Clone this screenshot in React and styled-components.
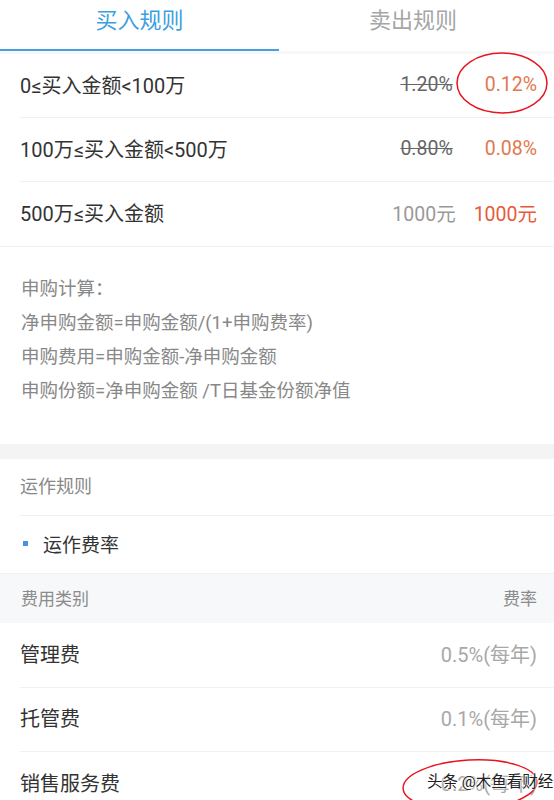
import React from 'react';
import styled, { createGlobalStyle } from 'styled-components';

const GlobalStyle = createGlobalStyle`
  body {
    margin: 0;
    background: #fff;
    font-family: Roboto, "Noto Sans CJK SC", sans-serif;
  }
`;

const Page = styled.div`
  position: relative;
  width: 554px;
  height: 800px;
  overflow: hidden;
  background: #fff;
`;

const Tabs = styled.div`
  display: flex;
  height: 51px;
  border-bottom: 3px solid #f6f7f9;
`;

const Tab = styled.div`
  flex: ${(p) => (p.active ? '0 0 279px' : '1')};
  display: flex;
  align-items: center;
  justify-content: center;
  font-size: 22px;
  padding-bottom: 14px;
  box-sizing: border-box;
  color: ${(p) => (p.active ? '#3d9fe0' : '#a6a6a6')};
  border-bottom: 2px solid ${(p) => (p.active ? '#4a9fdc' : 'transparent')};
  margin-left: ${(p) => (p.active ? '0' : '-7px')};
`;

const Row = styled.div`
  display: flex;
  align-items: center;
  height: ${(p) => p.h || 64}px;
  margin-left: 20px;
  padding-right: 17px;
  padding-bottom: 3px;
  box-sizing: border-box;
  border-bottom: ${(p) => (p.last ? 'none' : '1px solid #f0f0f0')};
`;

const Label = styled.div`
  flex: 1;
  font-size: 20px;
  color: #333;
`;

const OldPrice = styled.span`
  font-size: 19.5px;
  color: ${(p) => (p.plain ? '#999' : '#666')};
  text-decoration: ${(p) => (p.plain ? 'none' : 'line-through')};
`;

const NewPrice = styled.span`
  font-size: 19.5px;
  color: ${(p) => (p.strong ? '#e65a3a' : '#e2784e')};
  margin-left: ${(p) => p.gap || 32}px;
`;

const RuleBlock = styled.div`
  border-top: 1px solid #f0f0f0;
  padding: 25px 20px 36px 21px;
  display: flex;
  flex-direction: column;
`;

const RuleLine = styled.div`
  font-size: 18.5px;
  line-height: 34px;
  color: #888;
`;

const Gap = styled.div`
  height: 15px;
  background: #f4f4f4;
`;

const SectionTitle = styled.div`
  display: flex;
  align-items: center;
  height: 57px;
  padding-bottom: 4px;
  box-sizing: border-box;
  margin-left: 20px;
  font-size: 18px;
  color: #888;
  border-bottom: 1px solid #f0f0f0;
`;

const SubTitle = styled.div`
  display: flex;
  align-items: center;
  height: 57px;
  padding-left: 23px;
  padding-bottom: 3px;
  box-sizing: border-box;
  font-size: 19px;
  color: #333;
`;

const Bullet = styled.span`
  width: 5px;
  height: 5px;
  background: #4a90e8;
  margin-right: 15px;
`;

const HeadRow = styled.div`
  display: flex;
  align-items: center;
  justify-content: space-between;
  height: 50px;
  padding: 0 17px 2px 21px;
  box-sizing: border-box;
  background: #f7f8fa;
  border-top: 1px solid #f0f0f0;
  font-size: 17px;
  color: #8c8c8c;
`;

const FeeValue = styled.span`
  font-size: 20px;
  color: #a8a8a8;
`;

const Overlay = styled.svg`
  position: absolute;
  left: 0;
  top: 0;
  pointer-events: none;
`;

const Watermark = styled.div`
  position: absolute;
  left: 427px;
  top: 769px;
  font-size: 15.5px;
  color: #222;
  text-shadow: 0 0 2px #fff, 0 0 2px #fff, 0 0 3px #fff;
`;

const buyRows = [
  { label: '0≤买入金额<100万', old: '1.20%', now: '0.12%' },
  { label: '100万≤买入金额<500万', old: '0.80%', now: '0.08%' },
  { label: '500万≤买入金额', old: '1000元', now: '1000元', plain: true },
];

const fees = [
  { label: '管理费', value: '0.5%(每年)' },
  { label: '托管费', value: '0.1%(每年)' },
  { label: '销售服务费', value: '0.2%(每年)' },
];

const App = () => {
  return (
    <Page>
      <GlobalStyle />
      <Tabs>
        <Tab active>买入规则</Tab>
        <Tab>卖出规则</Tab>
      </Tabs>

      {buyRows.map((r, i) => (
        <Row key={r.label} last={i === buyRows.length - 1}>
          <Label>{r.label}</Label>
          <OldPrice plain={r.plain}>{r.old}</OldPrice>
          <NewPrice strong={r.plain} gap={r.plain ? 18 : 32}>
            {r.now}
          </NewPrice>
        </Row>
      ))}

      <RuleBlock>
        <RuleLine>申购计算：</RuleLine>
        <RuleLine>净申购金额=申购金额/(1+申购费率)</RuleLine>
        <RuleLine>申购费用=申购金额-净申购金额</RuleLine>
        <RuleLine>申购份额=净申购金额 /T日基金份额净值</RuleLine>
      </RuleBlock>

      <Gap />

      <SectionTitle>运作规则</SectionTitle>
      <SubTitle>
        <Bullet />
        运作费率
      </SubTitle>
      <HeadRow>
        <span>费用类别</span>
        <span>费率</span>
      </HeadRow>
      {fees.map((f, i) => (
        <Row key={f.label} h={64.5} last={i === fees.length - 1}>
          <Label>{f.label}</Label>
          <FeeValue>{f.value}</FeeValue>
        </Row>
      ))}

      <Overlay width="554" height="800">
        <ellipse cx="502" cy="83" rx="45" ry="30" fill="none" stroke="#e8141e" strokeWidth="1.5" />
        <ellipse cx="470" cy="785" rx="67" ry="25" fill="none" stroke="#e8141e" strokeWidth="1.5" transform="rotate(-3 470 785)" />
      </Overlay>
      <Watermark>头条 @木鱼看财经</Watermark>
    </Page>
  );
};

export default App;
